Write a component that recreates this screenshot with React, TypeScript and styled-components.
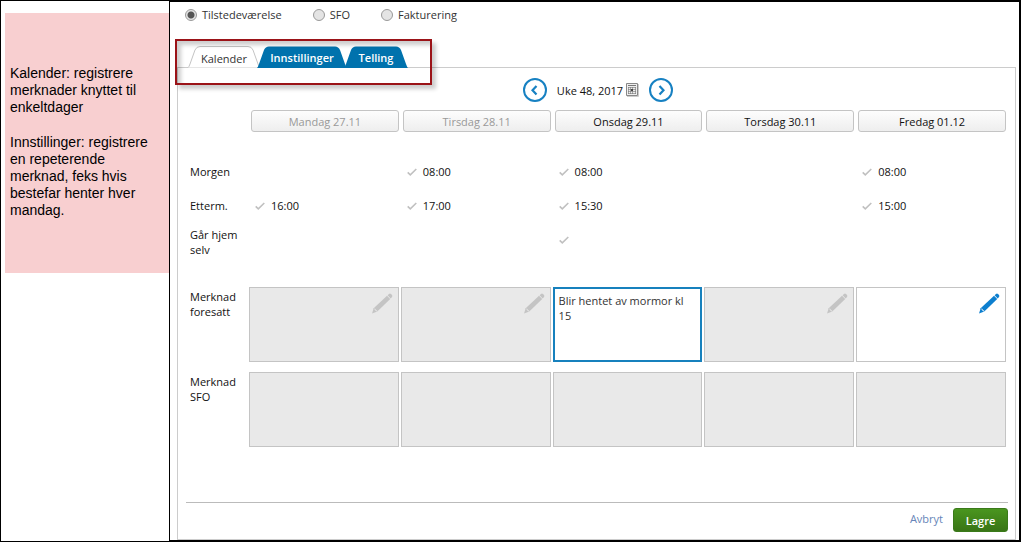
import React, { useState } from "react";
import styled, { createGlobalStyle } from "styled-components";

const GlobalStyle = createGlobalStyle`
  *, *::before, *::after { box-sizing: border-box; }
  body { margin: 0; background: #fff; }
  button, input, textarea { font: inherit; color: inherit; margin: 0; }
`;

const Page = styled.div`
  display: flex;
  min-height: 100vh;
  border: 1px solid #000;
  border-right: 0;
  border-top: 0;
  font: 11px/15px "Open Sans", sans-serif;
  color: #111;
`;

const Aside = styled.aside`
  flex: 0 0 168px;
  padding: 12px 0 0 4px;
  border-top: 1px solid #000;
`;

const Help = styled.div`
  min-height: 260px;
  padding: 52px 8px 52px 5px;
  background: #f8cfd0;
  color: #000;
  font: 14px/17px "Liberation Sans", Arial, sans-serif;

  p { margin: 0 0 18px; }
  p:last-child { margin: 0; }
`;

const Main = styled.main`
  position: relative;
  flex: 1;
  display: flex;
  flex-direction: column;
  min-width: 0;
  padding: 6px 3px 0 7px;
  border: solid #000;
  border-width: 2px 2px 1px 1px;
`;

const ModeBar = styled.form`
  display: flex;
  gap: 31px;
  padding-left: 8px;
  height: 14px;
`;

const RadioLabel = styled.label`
  display: flex;
  align-items: center;
  gap: 5px;
  line-height: 14px;
  color: #333;
`;

const Radio = styled.input`
  appearance: none;
  width: 12px;
  height: 12px;
  border: 1px solid #999;
  border-radius: 50%;
  background: #e4e4e4;

  &:checked { background: radial-gradient(circle, #555 0 3px, #e4e4e4 4px); }
`;

const TabBar = styled.div`
  display: flex;
  margin-top: 24px;
  padding-left: 11px;
`;

const Tab = styled.button<{ $width: number; $active: boolean }>`
  position: relative;
  z-index: ${(p) => (p.$active ? 1 : 2)};
  width: ${(p) => p.$width}px;
  height: 22px;
  margin-bottom: -1px;
  padding: ${(p) => (p.$active ? "3px 0 0" : "1px 0 0")};
  border: 0;
  background: none;
  color: ${(p) => (p.$active ? "#333" : "#fff")};
  font-weight: ${(p) => (p.$active ? 400 : 600)};
  white-space: nowrap;

  & + & { margin-left: -3px; }
  svg { position: absolute; inset: 0; z-index: -1; overflow: visible; }
`;

const Highlight = styled.div`
  position: absolute;
  z-index: 3;
  top: 37px;
  left: 5px;
  width: 257px;
  height: 46px;
  border: 2px solid #9b1318;
  box-shadow: 4px 4px 4px rgba(0, 0, 0, 0.2), inset 4px 4px 4px rgba(0, 0, 0, 0.2);
  pointer-events: none;
`;

const Panel = styled.section`
  flex: 1;
  display: flex;
  flex-direction: column;
  padding: 10px 7px 7px 8px;
  border: 1px solid #ccc;
`;

const WeekNav = styled.nav`
  display: flex;
  align-items: center;
  justify-content: center;
  gap: 10px;
  height: 24px;
  padding-left: 2px;
`;

const RoundButton = styled.button`
  display: flex;
  padding: 0;
  border: 0;
  background: none;
`;

const Week = styled.span`
  display: flex;
  align-items: center;
  gap: 3px;
`;

const Calendar = styled.table`
  width: 100%;
  margin: 8px 0 auto;
  padding: 0 1px 0 4px;
  table-layout: fixed;
  border-collapse: separate;
  border-spacing: 0;

  th { font-weight: 400; text-align: left; }
  th, td { padding: 0; vertical-align: top; }
`;

const LabelCol = styled.col`
  width: 58px;
`;

const DayHead = styled.th`
  && { padding: 0 1px 23px 3px; }
`;

const DayButton = styled.button<{ $past: boolean }>`
  display: block;
  width: 100%;
  height: 22px;
  padding: 0;
  border: 1px solid #c4c4c4;
  border-radius: 3px;
  background: linear-gradient(#fdfdfd, #eee);
  color: ${(p) => (p.$past ? "#999" : "#111")};
`;

const TimeRow = styled.tr<{ $tall?: boolean }>`
  height: ${(p) => (p.$tall ? 64 : 34)}px;

  && th { padding-top: ${(p) => (p.$tall ? 4 : 9)}px; }
  && td { padding: 9px 0 0 7px; }
`;

const Time = styled.span`
  display: flex;
  align-items: center;
  gap: 6px;
  height: 15px;
`;

const NoteRow = styled.tr`
  && th { padding: 2px 8px 0 0; }
  && td { padding: 0 1px 10px; }
`;

const NoteBox = styled.div`
  position: relative;
  display: flex;

  svg { position: absolute; top: 6px; right: 6px; }
`;

const Note = styled.textarea<{ $active?: boolean }>`
  display: block;
  width: 100%;
  height: 75px;
  padding: ${(p) => (p.$active ? "4px 4px" : "5px 5px")};
  border: ${(p) => (p.$active ? "2px solid #1781bd" : "1px solid #c4c4c4")};
  border-radius: 0;
  outline: 0;
  resize: none;
  overflow: hidden;
  background: #fff;
  color: #333;

  &:disabled { background: #e9e9e9; }
`;

const Footer = styled.footer`
  display: flex;
  justify-content: flex-end;
  align-items: flex-start;
  gap: 10px;
  padding-top: 5px;
  border-top: 1px solid #bbb;
`;

const Cancel = styled.a`
  color: #6685b8;
  line-height: 22px;
  text-decoration: none;
`;

const Save = styled.button`
  width: 55px;
  height: 24px;
  padding: 0;
  border: 1px solid #3a7a1a;
  border-radius: 3px;
  background: linear-gradient(#4a961f, #397516);
  color: #fff;
  font-weight: 600;
`;

const TabShape = ({ width: w, active }: { width: number; active: boolean }) => (
  <svg width={w} height="22" aria-hidden="true">
    <path
      d={`M0 ${active ? 21.5 : 22} Q1 21 2 18 L7 4 Q8.500 .5 12 .5 L${w - 12} .5 Q${w - 8.5} .5 ${w - 7} 4 L${w - 2} 18 Q${w - 1} 21 ${w} ${active ? 21.5 : 22}`}
      fill={active ? "#fff" : "#0072ad"}
      stroke={active ? "#c4c4c4" : "none"}
    />
  </svg>
);

const Arrow = ({ right = false }: { right?: boolean }) => (
  <svg width="24" height="24" viewBox="0 0 24 24" fill="none" stroke="#1781c2" aria-hidden="true">
    <circle cx="12" cy="12" r="11" strokeWidth="2" />
    <path d={right ? "M10.500 8l4 4.300-4 4.300" : "M13.500 8l-4 4.300 4 4.300"} strokeWidth="2.200" />
  </svg>
);

const CalendarIcon = () => (
  <svg width="13" height="14" viewBox="0 0 13 14" fill="none" aria-hidden="true">
    <path d="M1 13.500h11.500V1" stroke="#ccc" />
    <path d="M.5 .5h11v12h-11z" fill="#eee" stroke="#888" />
    <path d="M2 2.500h8" stroke="#777" />
    <path d="M2 4.500h8M2 6.500h8M2 8.500h8M2 10.500h8M2.500 4v7M4.500 4v7M6.500 4v7M9.500 4v7" stroke="#777" strokeOpacity=".6" />
    <path d="M5 6h2v2H5z" fill="#444" />
  </svg>
);

const Check = () => (
  <svg width="10" height="8" viewBox="0 0 10 8" fill="none" aria-label="Ja">
    <path d="M.7 4.300L3.300 6.800 9.300 1" stroke="#c0c0c0" strokeWidth="1.600" />
  </svg>
);

const Pencil = ({ color, edge }: { color: string; edge: string }) => (
  <svg width="21" height="21" viewBox="0 0 21 21" aria-hidden="true">
    <path d="M0 20.500L1.700 15.300 15 2.700 18.200 5.900 5.300 18.600z" fill={color} />
    <path d="M15.600 2.200L17 .9Q18 .2 19 1L20 2.100Q20.700 3 20 4.100L18.700 5.400z" fill={color} />
    <path d="M2.300 16l1 .2.300 1.300 1.300.2.200 1" fill="none" stroke={edge} strokeWidth=".8" />
  </svg>
);

const tabs = [
  { name: "Kalender", width: 72 },
  { name: "Innstillinger", width: 90 },
  { name: "Telling", width: 64 },
];

const days = ["Mandag 27.11", "Tirsdag 28.11", "Onsdag 29.11", "Torsdag 30.11", "Fredag 01.12"];

const times = [
  { label: "Morgen", values: [null, "08:00", "08:00", null, "08:00"] },
  { label: "Etterm.", values: ["16:00", "17:00", "15:30", null, "15:00"] },
  { label: "Går hjem selv", tall: true, values: [null, null, "", null, null] },
];

const editableDays = [2, 4];

export default function App() {
  const [mode, setMode] = useState("Tilstedeværelse");
  const [tab, setTab] = useState("Kalender");

  return (
    <>
      <GlobalStyle />
      <Page>
        <Aside>
          <Help>
            <p>Kalender: registrere merknader knyttet til enkeltdager</p>
            <p>Innstillinger: registrere en repeterende merknad, feks hvis bestefar henter hver mandag.</p>
          </Help>
        </Aside>
        <Main>
          <ModeBar>
            {["Tilstedeværelse", "SFO", "Fakturering"].map((m) => (
              <RadioLabel key={m}>
                <Radio type="radio" name="mode" checked={mode === m} onChange={() => setMode(m)} />
                {m}
              </RadioLabel>
            ))}
          </ModeBar>
          <TabBar role="tablist">
            {tabs.map(({ name, width }) => (
              <Tab
                key={name}
                type="button"
                role="tab"
                aria-selected={tab === name}
                $width={width}
                $active={tab === name}
                onClick={() => setTab(name)}
              >
                <TabShape width={width} active={tab === name} />
                {name}
              </Tab>
            ))}
          </TabBar>
          <Highlight />
          <Panel>
            <WeekNav>
              <RoundButton type="button" aria-label="Forrige uke"><Arrow /></RoundButton>
              <Week>Uke 48, 2017 <CalendarIcon /></Week>
              <RoundButton type="button" aria-label="Neste uke"><Arrow right /></RoundButton>
            </WeekNav>
            <Calendar>
              <colgroup>
                <LabelCol />
                {days.map((d) => <col key={d} />)}
              </colgroup>
              <thead>
                <tr>
                  <td />
                  {days.map((d, i) => (
                    <DayHead key={d} scope="col">
                      <DayButton type="button" $past={i < 2}>{d}</DayButton>
                    </DayHead>
                  ))}
                </tr>
              </thead>
              <tbody>
                {times.map((row) => (
                  <TimeRow key={row.label} $tall={row.tall}>
                    <th scope="row">{row.label}</th>
                    {row.values.map((v, i) => (
                      <td key={i}>{v !== null && <Time><Check />{v}</Time>}</td>
                    ))}
                  </TimeRow>
                ))}
                <NoteRow>
                  <th scope="row">Merknad foresatt</th>
                  {days.map((d, i) => (
                    <td key={d}>
                      <NoteBox>
                        <Note
                          aria-label={`Merknad foresatt ${d}`}
                          disabled={!editableDays.includes(i)}
                          $active={i === 2}
                          defaultValue={i === 2 ? "Blir hentet av mormor kl 15" : ""}
                        />
                        {i !== 2 && (
                          <Pencil color={i === 4 ? "#0d7fcf" : "#c4c4c4"} edge={i === 4 ? "#fff" : "#e9e9e9"} />
                        )}
                      </NoteBox>
                    </td>
                  ))}
                </NoteRow>
                <NoteRow>
                  <th scope="row">Merknad SFO</th>
                  {days.map((d) => (
                    <td key={d}>
                      <NoteBox><Note aria-label={`Merknad SFO ${d}`} disabled /></NoteBox>
                    </td>
                  ))}
                </NoteRow>
              </tbody>
            </Calendar>
            <Footer>
              <Cancel href="#">Avbryt</Cancel>
              <Save type="button">Lagre</Save>
            </Footer>
          </Panel>
        </Main>
      </Page>
    </>
  );
}
